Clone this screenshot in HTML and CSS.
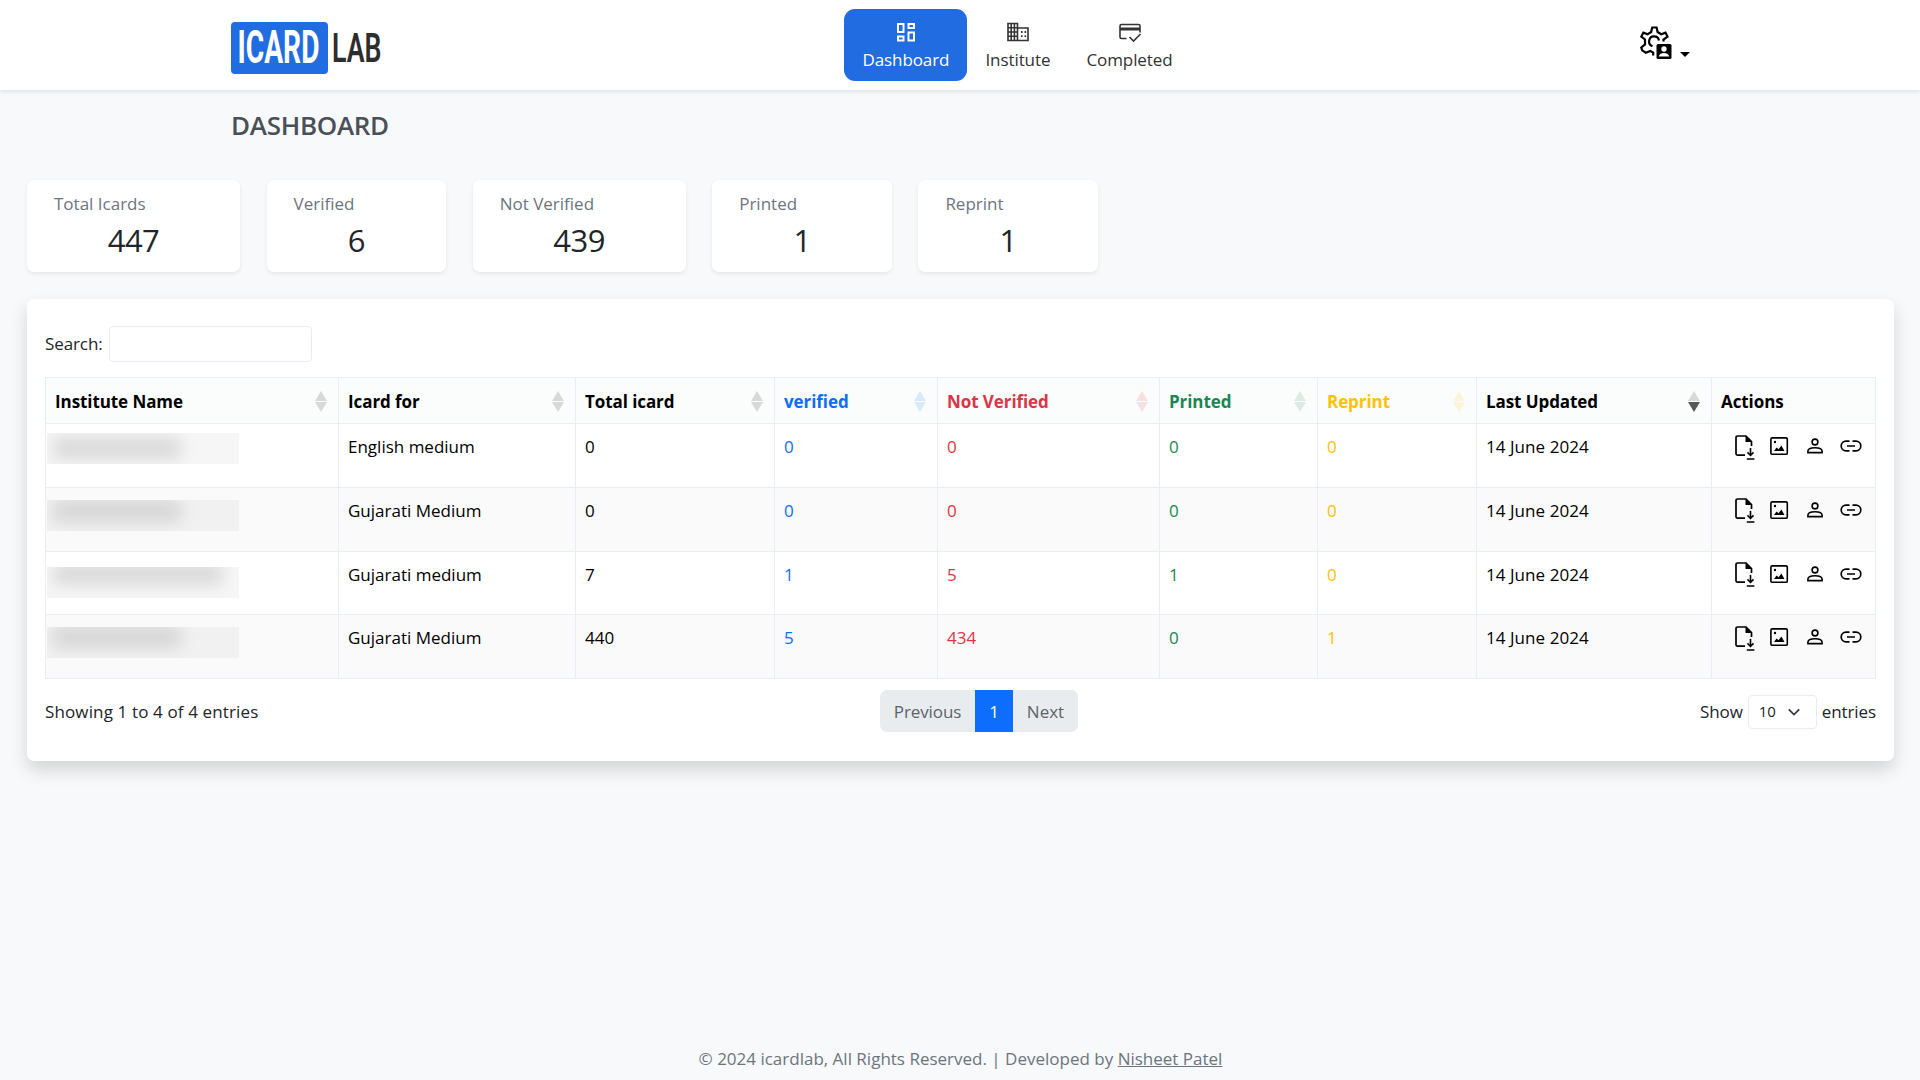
FILE: index.html
```html
<!DOCTYPE html>
<html lang="en">
<head>
    <meta charset="UTF-8">
    <meta name="viewport" content="width=device-width, initial-scale=1.0">
    <title>icardlab - Dashboard</title>
    <link rel="stylesheet" href="styles.css">
</head>
<body>
    <!-- shared icons -->
    <svg class="sprite" xmlns="http://www.w3.org/2000/svg">
        <symbol id="i-file" viewBox="0 0 20 26">
            <path d="M10 20.2H2.6A1.6 1.6 0 0 1 1 18.6V2.6A1.6 1.6 0 0 1 2.6 1H11L16.5 6.5V11" fill="none" stroke="currentColor" stroke-width="1.7"/>
            <path d="M10.5 1V7H16.8Z" fill="currentColor"/>
            <path d="M15.5 13v7M12.5 17.4l3 3 3-3M11.8 24h7.6" fill="none" stroke="currentColor" stroke-width="1.6"/>
        </symbol>
        <symbol id="i-image" viewBox="0 0 20 20">
            <rect x="1.9" y="1.9" width="16.4" height="16.4" rx="1.4" fill="none" stroke="currentColor" stroke-width="1.6"/>
            <path d="M5 15l2.6-3.6 1.9 1.8 2.9-3.6L15.5 15Z" fill="currentColor"/>
            <circle cx="6" cy="6" r="1.2" fill="currentColor"/>
        </symbol>
        <symbol id="i-user" viewBox="0 0 18 18">
            <circle cx="9" cy="5" r="2.9" fill="none" stroke="currentColor" stroke-width="1.6"/>
            <path d="M1.9 15.6v-1.3c0-2.3 3.6-3.5 7.1-3.5s7.1 1.2 7.1 3.5v1.3Z" fill="none" stroke="currentColor" stroke-width="1.6"/>
        </symbol>
        <symbol id="i-link" viewBox="0 0 22 12">
            <path d="M9.5 1.2H6a4.8 4.8 0 0 0 0 9.6h3.5M12.5 1.2H16a4.8 4.8 0 0 1 0 9.6h-3.5M7 6h8" fill="none" stroke="currentColor" stroke-width="1.7"/>
        </symbol>
    </svg>

    <header class="header">
        <a href="#" class="logo">
            <span class="logo-box">
                <svg width="97" height="52"><text x="6.5" y="40.6" textLength="82" lengthAdjust="spacingAndGlyphs">ICARD</text></svg>
            </span>
            <svg width="54" height="52"><text class="lab" x="4" y="40.2" textLength="49.5" lengthAdjust="spacingAndGlyphs">LAB</text></svg>
        </a>
        <nav class="nav">
            <a href="#" class="nav-link active">
                <svg width="24" height="24" viewBox="0 0 24 24" fill="none" stroke="currentColor" stroke-width="2">
                    <path d="M4 4h5.5v8H4zM14.5 4H20v4h-5.5zM14.5 12.5H20v8h-5.5zM4 16.5h5.5v4H4z"/>
                </svg>
                <span>Dashboard</span>
            </a>
            <a href="#" class="nav-link">
                <svg width="24" height="24" viewBox="0 0 24 24" fill="none" stroke="currentColor" stroke-width="1.6">
                    <path d="M2 3.5h9.500v17H2zM2 7.800h9.500M2 12h9.500M2 16.200h9.500M5.200 3.500v17M8.400 3.500v17M11.500 8H22v12.500H11.500"/>
                    <path d="M15 12h1.600M18.500 12h1.600M15 16.200h1.600M18.500 16.200h1.600" stroke-width="1.8"/>
                </svg>
                <span>Institute</span>
            </a>
            <a href="#" class="nav-link">
                <svg width="24" height="24" viewBox="0 0 24 24" fill="none" stroke="currentColor" stroke-width="1.6">
                    <path d="M8.500 18.500H3.500A1.500 1.500 0 0 1 2 17V6a1.500 1.500 0 0 1 1.500-1.500h17A1.500 1.500 0 0 1 22 6v6.500M11.500 17l4 4 7-7"/>
                    <path d="M2 9h20" stroke-width="3"/>
                </svg>
                <span>Completed</span>
            </a>
        </nav>
        <a href="#" class="settings">
            <svg width="32" height="34" viewBox="0 0 32 34">
                <path d="M13.2 29.5V26.6L10.3 25 5.8 26.7 2.2 24.3 1.3 21.5 5 18.4V13.5L1.3 10.6 3.4 6.6 7.6 8.2 11.2 6 12.2 1.5H16.6L17.6 6 21.2 8.2 25.5 6.6 27.5 10.6 23.5 13.5V15.5" fill="none" stroke="#000" stroke-width="2.2"/>
                <path d="M12.5 20.2A5 5 0 1 1 19 14.5" fill="none" stroke="#000" stroke-width="2.2"/>
                <rect x="16.5" y="18" width="15" height="15" rx="1.5"/>
                <circle cx="24" cy="23" r="2.7" fill="#fff"/>
                <path d="M18.8 30.5c.8-4.6 9.6-4.6 10.4 0Z" fill="#fff"/>
            </svg>
            <span class="caret"></span>
        </a>
    </header>

    <h1 class="page-title">DASHBOARD</h1>

    <section class="stats">
        <div class="stat wide"><p>Total Icards</p><h2>447</h2></div>
        <div class="stat"><p>Verified</p><h2>6</h2></div>
        <div class="stat wide"><p>Not Verified</p><h2>439</h2></div>
        <div class="stat"><p>Printed</p><h2>1</h2></div>
        <div class="stat"><p>Reprint</p><h2>1</h2></div>
    </section>

    <main class="panel">
        <div class="search">
            <label for="search">Search:</label>
            <input type="search" id="search">
        </div>

        <table class="table">
            <colgroup>
                <col class="c-name"><col class="c-for"><col class="c-total"><col class="c-verified"><col class="c-not">
                <col class="c-printed"><col class="c-reprint"><col class="c-updated"><col class="c-actions">
            </colgroup>
            <thead>
                <tr>
                    <th class="sort">Institute Name</th>
                    <th class="sort">Icard for</th>
                    <th class="sort">Total icard</th>
                    <th class="sort blue">verified</th>
                    <th class="sort red">Not Verified</th>
                    <th class="sort green">Printed</th>
                    <th class="sort yellow">Reprint</th>
                    <th class="sort desc">Last Updated</th>
                    <th>Actions</th>
                </tr>
            </thead>
            <tbody id="rows"></tbody>
        </table>

        <div class="table-footer">
            <div class="info">Showing 1 to 4 of 4 entries</div>
            <div class="pagination">
                <a href="#" class="prev">Previous</a>
                <a href="#" class="current">1</a>
                <a href="#" class="next">Next</a>
            </div>
            <div class="length">
                <span>Show</span>
                <span class="select">10
                    <svg width="14" height="14" viewBox="0 0 16 16" fill="none" stroke="#343a40" stroke-width="2"><path d="M2 5l6 6 6-6"/></svg>
                </span>
                <span>entries</span>
            </div>
        </div>
    </main>

    <footer class="footer">© 2024 icardlab, All Rights Reserved. | Developed by <a href="#">Nisheet Patel</a></footer>

    <script>
        const rows = [
            ['English medium', 0, 0, 0, 0, 0, 'mask-1'],
            ['Gujarati Medium', 0, 0, 0, 0, 0, 'mask-2'],
            ['Gujarati medium', 7, 1, 5, 1, 0, 'mask-3'],
            ['Gujarati Medium', 440, 5, 434, 0, 1, 'mask-4']
        ];

        document.getElementById('rows').innerHTML = rows.map(r => `
            <tr>
                <td class="name"><div class="mask ${r[6]}"></div></td>
                <td>${r[0]}</td>
                <td>${r[1]}</td>
                <td class="blue">${r[2]}</td>
                <td class="red">${r[3]}</td>
                <td class="green">${r[4]}</td>
                <td class="yellow">${r[5]}</td>
                <td class="date">14 June 2024</td>
                <td>
                    <div class="actions">
                        <svg width="20" height="26"><use href="#i-file"/></svg>
                        <svg width="20" height="20"><use href="#i-image"/></svg>
                        <svg width="18" height="18"><use href="#i-user"/></svg>
                        <svg width="22" height="12"><use href="#i-link"/></svg>
                    </div>
                </td>
            </tr>`).join('');
    </script>
</body>
</html>
```
FILE: styles.css
```css
* {
    box-sizing: border-box;
}
body {
    margin: 0;
    height: 1080px;
    display: flex;
    flex-direction: column;
    background: #f8f9fb;
    color: #212529;
    font-family: 'Segoe UI', 'Open Sans', sans-serif;
    font-size: 17px;
    line-height: 27px;
}
a {
    color: inherit;
    text-decoration: none;
}
.sprite {
    display: none;
}

/* Header */
.header {
    height: 90px;
    flex: none;
    display: grid;
    grid-template-columns: 613px 1fr 281px;
    padding-left: 231.4px;
    background: #fff;
    box-shadow: 0 2px 4px rgba(0, 0, 0, 0.09);
}
.logo {
    display: flex;
    padding-top: 22px;
}
.logo-box {
    width: 97px;
    height: 52px;
    border-radius: 4px;
    background: #216ce0;
}
.logo svg {
    overflow: visible;
}
.logo text {
    font-family: Roboto, sans-serif;
    font-size: 47px;
    font-weight: 700;
    fill: #fff;
}
.logo .lab {
    font-size: 41px;
    font-weight: 600;
    fill: #2d2d2d;
}
.nav {
    display: flex;
    padding-top: 9px;
}
.nav-link {
    height: 72px;
    padding: 11px 18px 0;
    border-radius: 11px;
    display: flex;
    flex-direction: column;
    align-items: center;
    letter-spacing: -0.08px;
    color: #333;
}
.nav-link span {
    margin-top: 2px;
}
.nav-link.active {
    background: #216ce0;
    color: #fff;
}
.settings {
    display: flex;
    padding: 26px 0 0 1px;
}
.caret {
    margin: 26px 0 0 8px;
    width: 10px;
    height: 5px;
    background: #000;
    clip-path: polygon(0 0, 100% 0, 50% 100%);
}

.page-title {
    margin: 19px 0 0 231px;
    font-size: 26px;
    line-height: 32px;
    font-weight: 600;
    letter-spacing: -0.3px;
    color: #495057;
}

/* Stat cards */
.stats {
    display: flex;
    gap: 26.5px;
    margin: 39px 0 0 27px;
}
.stat {
    width: 179.7px;
    height: 92px;
    padding: 10px 27px;
    border-radius: 7px;
    background: #fff;
    box-shadow: 0 2px 4px rgba(0, 0, 0, 0.075);
}
.stat.wide {
    width: 213px;
}
.stat p {
    margin: 0;
    color: #6c757d;
}
.stat h2 {
    margin: 4px 0 0;
    font-size: 31px;
    line-height: 38px;
    font-weight: 400;
    letter-spacing: -0.5px;
    text-align: center;
}

/* Table panel */
.panel {
    height: 462px;
    margin: 27px 26px 0 27px;
    padding: 27px 18px 0;
    border-radius: 7px;
    background: #fff;
    box-shadow: 0 9px 18px rgba(0, 0, 0, 0.15);
}
.search {
    display: flex;
    align-items: center;
    gap: 6px;
}
.search label {
    margin-top: -2px;
    letter-spacing: -0.1px;
}
.search input {
    width: 203px;
    height: 36px;
    border: 1px solid #e9ecf3;
    border-radius: 4px;
    background: #fff;
}
.table {
    width: 1830px;
    margin-top: 15px;
    border-collapse: collapse;
    table-layout: fixed;
    color: #000;
}
.c-name { width: 293px; }
.c-for { width: 237px; }
.c-total { width: 199px; }
.c-verified { width: 163px; }
.c-not { width: 222px; }
.c-printed { width: 158px; }
.c-reprint { width: 159px; }
.c-updated { width: 235px; }
.c-actions { width: 164px; }
.table th,
.table td {
    padding: 9px 9px 0;
    border: 1px solid #e9eef4;
    text-align: left;
    vertical-align: top;
}
.table th {
    position: relative;
    height: 46px;
    padding-top: 10px;
    background: #fbfdfc;
    font-weight: 700;
    letter-spacing: -0.08px;
}
.table td {
    height: 63.75px;
}
.table tr:nth-child(even) td {
    background: #fafafa;
}
.table .date {
    letter-spacing: 0.05px;
}
.sort::before,
.sort::after {
    content: "";
    position: absolute;
    right: 11px;
    width: 12px;
    height: 10px;
    background: currentColor;
    opacity: 0.14;
}
.sort::before {
    top: 13px;
    clip-path: polygon(50% 0, 100% 100%, 0 100%);
}
.sort::after {
    top: 24px;
    clip-path: polygon(0 0, 100% 0, 50% 100%);
}
.sort.desc::after {
    opacity: 0.65;
}
.blue { color: #0d6efd; }
.red { color: #dc3545; }
.green { color: #198754; }
.yellow { color: #ffc107; }

/* Hidden institute names */
.table .name {
    padding: 9px 1px 0;
}
.mask {
    width: 192px;
    height: 31px;
    overflow: hidden;
    background: rgba(0, 0, 0, 0.035);
}
.mask::before {
    content: "";
    display: block;
    width: 128px;
    height: 22px;
    margin: 4px 0 0 6px;
    background: rgba(0, 0, 0, 0.11);
    filter: blur(8px);
}
.mask-2 { margin-top: 3px; }
.mask-2::before { margin-top: 0; }
.mask-3 { margin-top: 6px; }
.mask-3::before {
    width: 170px;
    margin-top: -4px;
}
.mask-4 { margin-top: 3px; }
.mask-4::before { margin-top: -1px; }

.actions {
    display: flex;
    align-items: center;
    padding-left: 14px;
    height: 26px;
}
.actions svg:nth-child(1) { margin-top: 3px; }
.actions svg:nth-child(2) { margin-left: 14px; }
.actions svg:nth-child(3) { margin-left: 17px; }
.actions svg:nth-child(4) { margin-left: 16px; }

.table-footer {
    display: grid;
    grid-template-columns: 835px 1fr auto;
    margin-top: 10px;
    height: 43px;
    align-items: center;
}
.info {
    padding-top: 2px;
    letter-spacing: 0.13px;
}
.pagination {
    display: flex;
    width: 198px;
    height: 42px;
    border-radius: 7px;
    overflow: hidden;
    background: #e9ecef;
    color: #5c636a;
    line-height: 43px;
    text-align: center;
}
.prev {
    width: 95px;
    letter-spacing: -0.1px;
}
.current {
    width: 38px;
    background: #0d6efd;
    color: #fff;
}
.next {
    width: 65px;
}
.length {
    display: flex;
    align-items: center;
    gap: 5px;
    padding-top: 2px;
    letter-spacing: -0.1px;
}
.select {
    display: flex;
    align-items: center;
    justify-content: space-between;
    width: 69px;
    height: 34px;
    padding: 0 15px 0 10px;
    border: 1px solid #e9ecf3;
    border-radius: 4px;
    font-size: 15px;
}

.footer {
    margin-top: auto;
    padding: 0 0 8px 1px;
    text-align: center;
    color: #6c757d;
}
.footer a {
    text-decoration: underline;
}
```
